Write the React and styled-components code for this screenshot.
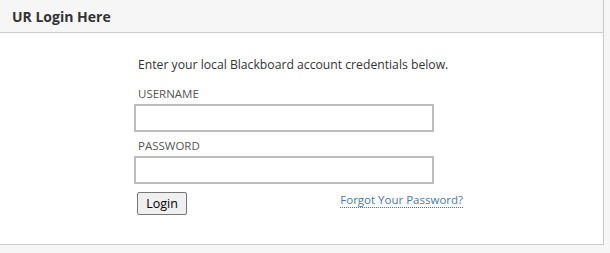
import React from 'react'
import styled, { createGlobalStyle } from 'styled-components'

const GlobalStyle = createGlobalStyle`
    body {
        margin: 0;
        background: #f6f6f6;
        font-family: "Open Sans", "Liberation Sans", sans-serif;
        color: #333;
    }
`

const App = () => (
    <>
        <GlobalStyle />
        <Panel>
            <Header>UR Login Here</Header>
            <Body>
                <Form>
                    <Intro>Enter your local Blackboard account credentials below.</Intro>
                    <Label htmlFor="user">USERNAME</Label>
                    <Input id="user" type="text" />
                    <Label htmlFor="pass">PASSWORD</Label>
                    <Input id="pass" type="password" />
                    <Actions>
                        <Button>Login</Button>
                        <Forgot href="#">Forgot Your Password?</Forgot>
                    </Actions>
                </Form>
            </Body>
        </Panel>
    </>
)

const Panel = styled.div`
    width: 603px;
    background: #fff;
    border-right: 1px solid #cbcbcb;
    border-bottom: 1px solid #cbcbcb;
`
const Header = styled.h2`
    margin: 0;
    height: 33px;
    box-sizing: border-box;
    padding: 0 12px;
    display: flex;
    align-items: center;
    background: #f6f6f6;
    border-bottom: 1px solid #cbcbcb;
    font-size: 14px;
    font-weight: 700;
    color: #333;
`
const Body = styled.div`
    height: 211px;
    padding-left: 134px;
    padding-top: 24px;
    box-sizing: border-box;
`
const Form = styled.div`
    display: flex;
    flex-direction: column;
    width: 332px;
`
const Intro = styled.p`
    margin: 0 0 14px 4px;
    font-size: 12.2px;
    line-height: 16px;
    color: #333;
`
const Label = styled.label`
    margin: 0 0 3px 4px;
    font-size: 11.5px;
    line-height: 14px;
    color: #555;
`
const Input = styled.input`
    width: 300px;
    height: 28px;
    box-sizing: border-box;
    border: 2px solid #bdbdbd;
    margin: 0 0 7px 0;
    outline: none;
`
const Actions = styled.div`
    display: flex;
    justify-content: space-between;
    align-items: flex-start;
    margin-top: 1px;
    padding: 0 3px;
`
const Button = styled.button`
    width: 50px;
    height: 23px;
    padding: 0;
    border: 1px solid #767676;
    border-radius: 2px;
    background: #efefef;
    font-family: "Open Sans", "Liberation Sans", sans-serif;
    font-size: 12.5px;
    color: #000;
`
const Forgot = styled.a`
    font-size: 11.5px;
    line-height: 15px;
    color: #4a78a8;
    text-decoration: none;
    border-bottom: 1px dotted #0b96c0;
`

export default App
